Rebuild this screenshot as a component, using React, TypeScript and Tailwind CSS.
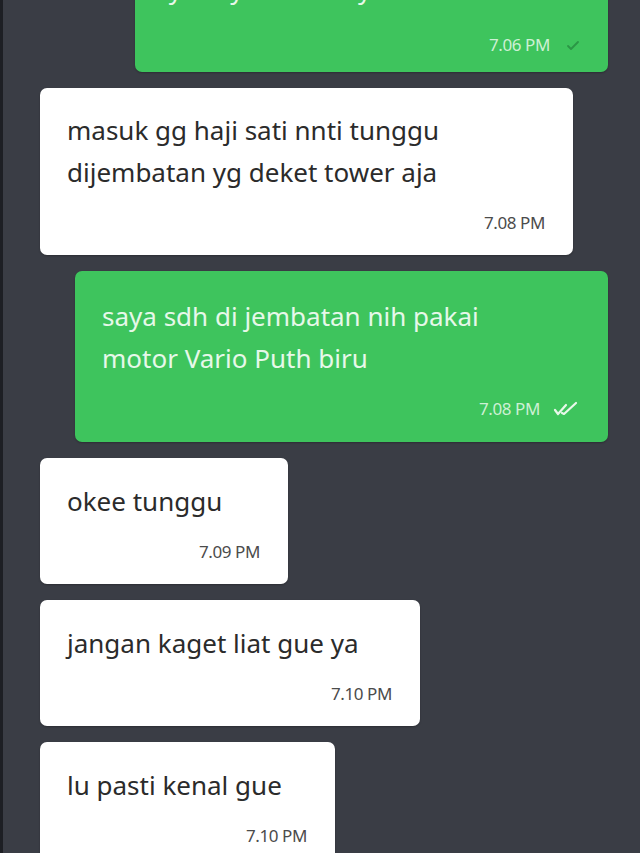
import React from 'react';

type Msg = {
  text: string[];
  time: string;
  out: boolean;
  width: string;
  pad: string;
  tick?: 'single' | 'double';
};

const SingleTick = () => (
  <svg width="14" height="12" viewBox="0 0 14 12" className="ml-[16px]">
    <path d="M2 7 L5 10 L12 3" fill="none" stroke="#2b9646" strokeWidth="1.8" strokeLinecap="round" strokeLinejoin="round" />
  </svg>
);

const DoubleTick = () => (
  <svg width="28" height="16" viewBox="0 0 28 16" className="ml-[12px]">
    <path d="M3 9 L6 13 L14 4" fill="none" stroke="#e8f8ea" strokeWidth="2.2" strokeLinecap="round" strokeLinejoin="round" />
    <path d="M10 12 L12 13 L24 2" fill="none" stroke="#e8f8ea" strokeWidth="2.2" strokeLinecap="round" strokeLinejoin="round" />
  </svg>
);

const Bubble: React.FC<{ m: Msg; first?: boolean }> = ({ m, first }) => {
  const base = m.out
    ? 'self-end bg-[#3ec45d] text-[#e6f8e9]'
    : 'self-start bg-white text-[#2b2b2b]';
  return (
    <div
      className={`${base} ${m.width} ${m.pad} rounded-[7px] pl-[27px] pr-[28px] shadow-[0_1px_2px_rgba(0,0,0,0.25)]`}
    >
      <div className="text-[26px] leading-[42px]">
        {m.text.map((t, i) => (
          <div key={i} className="whitespace-nowrap">{t}</div>
        ))}
      </div>
      <div className={`${first ? 'mt-[25px]' : 'mt-[20px]'} flex h-[20px] items-center justify-end`}>
        <span className={`text-[17px] leading-[20px] tracking-[-0.4px] ${m.out ? 'text-[#cdf0d4]' : 'text-[#4b4b4b]'}`}>{m.time}</span>
        {m.tick === 'single' && <SingleTick />}
        {m.tick === 'double' && <DoubleTick />}
      </div>
    </div>
  );
};

const messages: Msg[] = [
  { text: ['iya saya kesana ya'], time: '7.06 PM', out: true, width: 'w-[473px]', pad: '-mt-[53px] pt-[21px] pb-[17px]', tick: 'single' },
  { text: ['masuk gg haji sati nnti tunggu', 'dijembatan yg deket tower aja'], time: '7.08 PM', out: false, width: 'w-[533px]', pad: 'pt-[21px] pb-[22px]' },
  { text: ['saya sdh di jembatan nih pakai', 'motor Vario Puth biru'], time: '7.08 PM', out: true, width: 'w-[533px]', pad: 'pt-[24px] pb-[23px]', tick: 'double' },
  { text: ['okee tunggu'], time: '7.09 PM', out: false, width: 'w-[248px]', pad: 'pt-[22px] pb-[22px]' },
  { text: ['jangan kaget liat gue ya'], time: '7.10 PM', out: false, width: 'w-[380px]', pad: 'pt-[22px] pb-[22px]' },
  { text: ['lu pasti kenal gue'], time: '7.10 PM', out: false, width: 'w-[295px]', pad: 'pt-[22px] pb-[22px]' },
];

export default function App() {
  return (
    <div
      className="h-[853px] w-[640px] overflow-hidden border-l-[3px] border-[#1d1f24] bg-[#3a3d45]"
      style={{ fontFamily: '"Noto Sans", sans-serif' }}
    >
      <div className="flex flex-col gap-[16px] pl-[37px] pr-[32px]">
        {messages.map((m, i) => (
          <Bubble key={i} m={m} first={i === 0} />
        ))}
      </div>
    </div>
  );
}
